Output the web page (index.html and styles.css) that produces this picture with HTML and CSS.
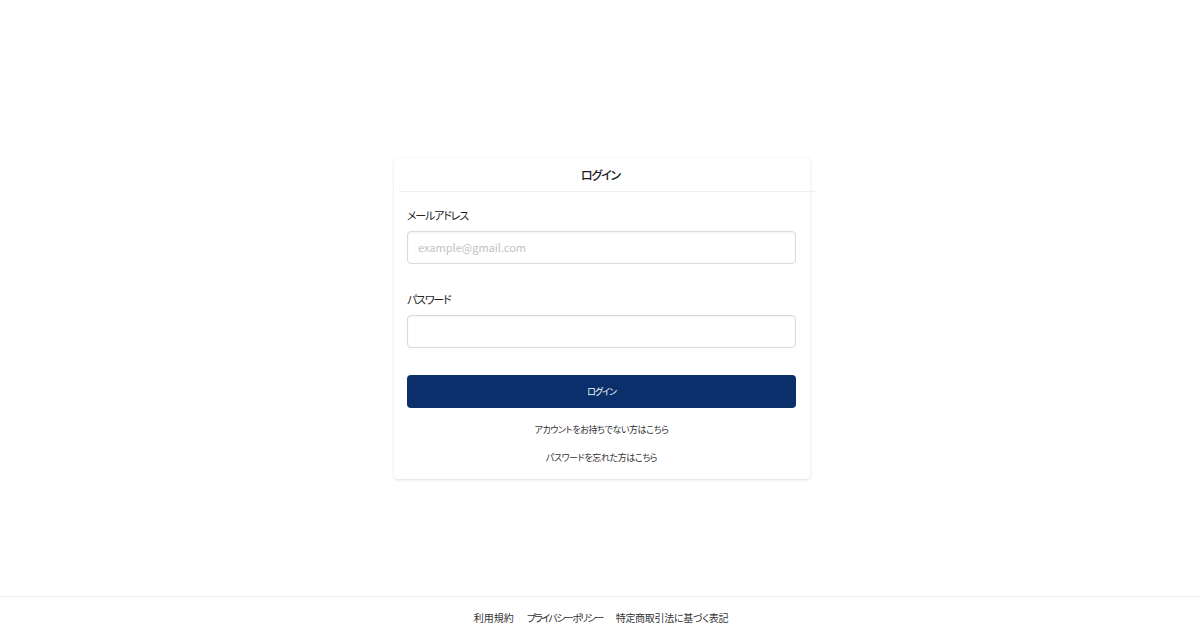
FILE: index.html
```html
<!DOCTYPE html>
<html lang="ja">
<head>
<meta charset="utf-8">
<title>ログイン</title>
<link rel="stylesheet" href="styles.css">
</head>
<body>
<div class="page">
  <div class="spacer"></div>
  <div class="card">
    <div class="card-header">ログイン</div>
    <form class="card-body">
      <label class="label" for="email">メールアドレス</label>
      <input class="input" id="email" type="email" placeholder="example@gmail.com">
      <label class="label label-second" for="pw">パスワード</label>
      <input class="input" id="pw" type="password">
      <button class="btn" type="button">ログイン</button>
      <a class="link link-first" href="#">アカウントをお持ちでない方はこちら</a>
      <a class="link" href="#">パスワードを忘れた方はこちら</a>
    </form>
  </div>
  <div class="spacer bottom">
    <footer class="footer">
      <a class="f-terms" href="#">利用規約</a>
      <a class="f-privacy" href="#">プライバシーポリシー</a>
      <a class="f-law" href="#">特定商取引法に基づく表記</a>
    </footer>
  </div>
</div>
</body>
</html>
```

FILE: styles.css
```css
* { box-sizing: border-box; }
html, body { margin: 0; padding: 0; }
body {
  font-family: "Noto Sans CJK JP", "Noto Sans", sans-serif;
  font-feature-settings: "palt";
  color: #222;
  background: #fff;
}
.page {
  height: 100vh;
  display: flex;
  flex-direction: column;
  align-items: center;
}
.spacer { flex: 1 1 0px; width: 100%; }
.bottom { display: flex; flex-direction: column; }
.card {
  width: 416px;
  margin-left: 4px;
  background: #fff;
  border-radius: 3px;
  box-shadow: 0 1px 3px rgba(0,0,0,0.12), 0 0 1px rgba(0,0,0,0.08);
}
.card-header {
  height: 34px;
  margin-left: 5px;
  margin-right: -5px;
  display: flex;
  align-items: center;
  justify-content: center;
  font-size: 12px;
  letter-spacing: -1.2px;
  font-weight: 500;
  color: #1e1e1e;
  border-bottom: 1px solid #eeeef2;
  padding-right: 13px;
  padding-top: 1px;
}
.card-body {
  display: flex;
  flex-direction: column;
  padding: 15px 14px 14px 13px;
}
.label {
  font-size: 11px;
  letter-spacing: -1.2px;
  line-height: 16px;
  color: #222;
  margin-bottom: 8px;
}
.label-second { margin-top: 27px; }
.input {
  height: 33px;
  border: 1px solid #d9d9de;
  border-radius: 4px;
  padding: 0 10px;
  font-family: inherit;
  font-size: 11px;
  box-shadow: inset 0 1px 2px rgba(0,0,0,0.05);
  outline: none;
}
.input::placeholder { color: #c2c2c6; }
.btn {
  margin-top: 27px;
  height: 33px;
  border: none;
  border-radius: 4px;
  background: #0a2f6b;
  color: #fff;
  font-family: inherit;
  font-feature-settings: "palt";
  font-size: 9px;
  letter-spacing: -1px;
}
.link {
  align-self: center;
  font-size: 9px;
  letter-spacing: -0.4px;
  line-height: 14px;
  color: #333;
  text-decoration: none;
  margin-top: 14px;
}
.link-first { margin-top: 15px; }
.footer {
  margin-top: auto;
  height: 40px;
  border-top: 1px solid #ececec;
  background: #fff;
  display: flex;
  align-items: center;
  justify-content: center;
  gap: 13px;
  padding-left: 2px;
  padding-top: 2px;
}
.footer a {
  font-size: 10px;
  color: #333;
  text-decoration: none;
}
.footer .f-privacy { letter-spacing: -1.6px; }
.footer .f-law { letter-spacing: -0.3px; }
```
